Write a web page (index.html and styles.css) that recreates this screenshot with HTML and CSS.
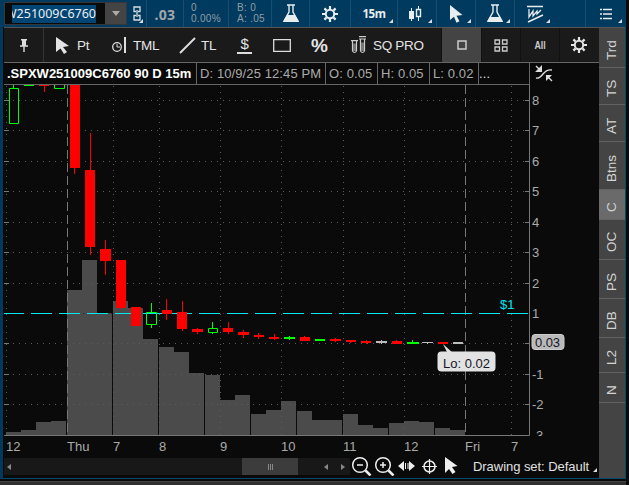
FILE: index.html
```html
<!DOCTYPE html>
<html lang="en">
<head>
<meta charset="utf-8">
<title>.SPXW251009C6760</title>
<link rel="stylesheet" href="styles.css">
</head>
<body>
<div class="window">
<header class="topbar">
  <div class="symbol"><div class="symbol-text"><span>W251009C6760</span></div><div class="drop"><svg width="8" height="5"><path d="M0 0h8L4 5z" fill="#aaa"/></svg></div></div>
  <div class="cell w20 corner link"><svg width="8" height="15" viewBox="0 0 8 15" fill="none" stroke="#d8dde0" stroke-width="1.3"><path d="M3 5.500H1V1h6v4.500H5M3 9.500H1V14h6V9.500H5M4 4v7"/></svg></div>
  <div class="cell w37 last">.03</div>
  <div class="cell w45 quote"><div>0</div><div>0.00%</div></div>
  <div class="cell w43 quote bid"><div>B: 0</div><div>A: .05</div></div>
  <div class="cell w38"><svg width="18" height="19" viewBox="0 0 18 19"><path d="M5 1h8M7 1v7L2 17h14L11 8V1" fill="none" stroke="#e8edf0" stroke-width="1.400"/><path d="M5 11h8l4 7H1z" fill="#e8edf0"/></svg></div>
  <div class="cell w41"><svg width="18" height="18" viewBox="-9 -9 18 18"><circle r="4.200" fill="none" stroke="#e8edf0" stroke-width="2"/><path d="M0-5v-3M0 5v3M5 0h3M-5 0h-3M3.600-3.600l2-2M-3.600-3.600l-2-2M3.600 3.600l2 2M-3.600 3.600l-2 2" stroke="#e8edf0" stroke-width="2.200"/></svg></div>
  <div class="cell w47 corner interval">15m</div>
  <div class="cell w39 corner candles"><svg width="14" height="16" viewBox="0 0 14 16"><path d="M3.500 2v13M10.500 0v3M10.500 11v4" stroke="#e8edf0"/><path d="M1 5h5v8H1z" fill="#e8edf0"/><path d="M8.500 3.500h4v7h-4z" fill="none" stroke="#e8edf0" stroke-width="1.400"/></svg></div>
  <div class="cell w39 corner"><svg width="13" height="18" viewBox="0 0 13 18"><path d="M0 0l12.500 10-6 .8 3 5.500-3 1.500-2.500-6L0 15z" fill="#e8edf0"/></svg></div>
  <div class="cell w39 corner"><svg width="18" height="19" viewBox="0 0 18 19"><path d="M5 1h8M7 1v7L2 17h14L11 8V1" fill="none" stroke="#e8edf0" stroke-width="1.400"/><path d="M4 13h10l3 5H1z" fill="#e8edf0"/></svg></div>
  <div class="cell w71 corner study"><svg width="17" height="18" viewBox="0 0 17 18" fill="none" stroke="#e8edf0" stroke-width="1.500"><path d="M0 1.500h16M1 17l15-7"/><path d="M2 4v8l4-6v5l4-5v3l4-4" stroke-width="1.300"/></svg></div>
  <div class="cell w40 corner list"><svg width="14" height="12" viewBox="0 0 14 12" stroke="#e8edf0" stroke-width="1.600"><path d="M1 1.500h2M4 1.500h9M1 6h2M4 6h9M1 10.500h2M4 10.500h9"/></svg></div>
</header>
<main class="main">
  <section class="panel">
    <nav class="tools">
      <div class="tool pin"><svg width="8" height="13" viewBox="0 0 8 13"><path d="M1 .7h6M0 7h8M4 7v6" stroke="#ddd" stroke-width="1.400"/><path d="M2 0h4v7H2z" fill="#ddd"/></svg></div>
      <div class="tool pt"><svg width="14" height="17" viewBox="0 0 14 17"><path d="M0 0l13 9-6 1 4 5-3 2-3.500-5.500L0 15z" fill="#e4e4e4"/></svg><span>Pt</span></div>
      <div class="tool tml"><svg width="14" height="16" viewBox="0 0 14 16" fill="none" stroke="#ddd"><circle cx="5" cy="10" r="4.300" stroke-width="1.300"/><path d="M5 7v3h3"/><path d="M13 0v16" stroke-width="2"/></svg><span>TML</span></div>
      <div class="tool tl"><svg width="17" height="17" viewBox="0 0 17 17"><path d="M1 16L16 1" stroke="#ddd" stroke-width="2"/></svg><span>TL</span></div>
      <div class="tool dollar"><span>$</span></div>
      <div class="tool rect"><svg width="18" height="13"><path d="M.7.700h16.600v11.600H.700z" fill="none" stroke="#ddd" stroke-width="1.300"/></svg></div>
      <div class="tool percent">%</div>
      <div class="tool sq"><svg width="15" height="18" viewBox="0 0 15 18" fill="none" stroke="#ccc" stroke-width="1.200"><path d="M0 4.600h7M8 .7h7M8 3h7"/><path d="M1.500 5v10Q3.500 18 5.500 15V5M9.500 3v12q2 3 4 0V3"/><path d="M2 7.500h3V15H2zM10 6.500h3V15h-3z" fill="#777" stroke="none"/></svg><span>SQ PRO</span></div>
      <div class="view active"><svg width="10" height="10"><path d="M1 1h8v8H1z" fill="none" stroke="#ccc" stroke-width="1.500"/></svg></div>
      <div class="view"><svg width="14" height="13" fill="none" stroke="#ccc" stroke-width="1.300"><path d="M1 1h4.500v4H1zM8.500 1H13v4H8.500zM1 8h4.500v4H1zM8.500 8H13v4H8.500z"/></svg></div>
      <div class="view all"><span>All</span></div>
      <div class="view"><svg width="18" height="18" viewBox="-9 -9 18 18"><circle r="4.200" fill="none" stroke="#e4e4e4" stroke-width="2"/><path d="M0-5v-3M0 5v3M5 0h3M-5 0h-3M3.600-3.600l2-2M-3.600-3.600l-2-2M3.600 3.600l2 2M-3.600 3.600l-2 2" stroke="#e4e4e4" stroke-width="2.200"/></svg></div>
    </nav>
    <div class="info">
      <div class="name">.SPXW251009C6760 90 D 15m</div>
      <div class="date">D: 10/9/25 12:45 PM</div>
      <div class="ohl">O: 0.05</div>
      <div class="ohl">H: 0.05</div>
      <div class="ohl low">L: 0.02</div>
      <div class="more">...</div>
      <div class="expand"><svg width="18" height="17" viewBox="0 0 18 17" fill="none" stroke="#ddd" stroke-width="1.400"><path d="M1 13q3 1 7-4t9-4M1 1l4 4M17 16l-4-4"/><path d="M7 0v7H0zM11 10h6l-6 6z" fill="#ddd" stroke="none"/></svg></div>
    </div>
    <svg class="chart" width="595" height="373" viewBox="4 85 595 373">
      <path class="vol" d="M6 435v-3h15v-2h15v-8h15v-1h15v14zM67 435V290h15v-30h15v53h15v122zM113 435V301h15v7h15v31h15v96zM159 435v-88h15v5h15v21h15v62zM205 435v-60h15v25h15v-5h15v40zM251 435v-21h15v-4h15v-9h15v34zM297 435v-24h15v9h30v15zM343 435v-21h15v11h15v3h15v7zM389 435v-12h15v-2h15v1h15v13zM435 435v-7h15v2h15v5z"/>
      <path class="grid" d="M7 100.500h522M7 130.500h522M7 161.500h522M7 191.500h522M7 222.500h522M7 252.500h522M7 283.500h522M7 343.500h522M7 374.500h522M7 404.500h522M6.500 86v349M113.500 86v349M159.500 86v349M220.500 86v349M281.500 86v349M343.500 86v349M404.500 86v349M511.500 86v349"/>
      <path class="session" d="M67.500 85v350M465.500 85v350"/>
      <path class="frame" d="M4 435.500h525.500V85M525 100.500h4M525 130.500h4M525 161.500h4M525 191.500h4M525 222.500h4M525 252.500h4M525 283.500h4M525 343.500h4M525 374.500h4M525 404.500h4M4 100.500h5M4 130.500h5M4 161.500h5M4 191.500h5M4 222.500h5M4 252.500h5M4 283.500h5M4 343.500h5M4 374.500h5M4 404.500h5"/>
      <path class="level" d="M3 313.500h525.500"/>
      <path class="level-dots" d="M27 313.500h501.500"/>
      <path class="down" d="M39 84h10v2H39zM44 85h1v7h-1zM70 84h10v84H70zM74 168h1v6h-1zM85 170h10v77H85zM90 133h1v122h-1zM100 249h11v12h-11zM105 240h1v35h-1zM116 260h10v48h-10zM120 308h1v1h-1zM131 307h10v19h-10zM162 310h10v4h-10zM166 299h1v21h-1zM177 312h10v17h-10zM182 301h1v30h-1zM192 329h11v3h-11zM197 328h1v6h-1zM223 328h10v4h-10zM228 322h1v12h-1zM238 332h11v3h-11zM243 330h1v8h-1zM254 335h10v2h-10zM258 333h1v6h-1zM269 337h10v2h-10zM274 334h1v6h-1zM300 337h10v4h-10zM304 336h1v1h-1zM330 339h11v2h-11zM335 338h1v4h-1zM346 340h10v2h-10zM350 342h1v1h-1zM361 341h10v2h-10zM366 340h1v4h-1zM392 341h10v3h-10zM396 340h1v1h-1zM438 342h10v2h-10z"/>
      <path class="up-line" d="M9.500 88.500h9v35h-9zM13.500 85v3M24 85.500h10M54.500 83.500h10v5h-10zM146.500 312.500h10v12h-10zM151.500 303v9M151.500 325v3M208.500 328.500h9v4h-9zM212.500 322v6M212.500 333v1M289.500 336v4M412.500 340v3"/>
      <path class="up" d="M284 337h11v2h-11zM315 339h10v2h-10zM407 342h12v2h-12z"/>
      <path class="flat" d="M376 341h11v2h-11zM381 340h1v4h-1zM422 342h11v1h-11zM427 342h1v2h-1zM453 342h10v2h-10z"/>
      <text class="cyan" x="500" y="309">$1</text>
      <g class="axis"><text x="532" y="105">8</text><text x="532" y="135">7</text><text x="532" y="166">6</text><text x="532" y="196">5</text><text x="532" y="227">4</text><text x="532" y="257">3</text><text x="532" y="288">2</text><text x="532" y="318">1</text><text x="532" y="379">-1</text><text x="532" y="409">-2</text><svg x="530" y="425" width="20" height="11"><text x="6" y="15">3</text></svg>
      <text x="6" y="451">12</text><text x="67" y="451">Thu</text><text x="113" y="451">7</text><text x="159" y="451">8</text><text x="220" y="451">9</text><text x="281" y="451">10</text><text x="343" y="451">11</text><text x="404" y="451">12</text><text x="465" y="451">Fri</text><text x="511" y="451">7</text></g>
      <path d="M443 344l5 10h6z" fill="#e2e2e2"/><rect x="437.500" y="351.500" width="58" height="20" rx="4" fill="#e2e2e2"/>
      <text class="dark" x="443" y="368" textLength="47">Lo: 0.02</text>
      <rect x="532" y="334.500" width="32" height="15" rx="3" fill="#b9b9b9" stroke="#ccc"/><text class="dark" x="535" y="347" textLength="25">0.03</text>
    </svg>
    <footer class="bottom">
      <div class="scroll"><svg width="4" height="6"><path d="M4 0v6L0 3z"/></svg><div class="thumb"><i></i><i></i><i></i></div><svg width="4" height="6"><path d="M4 0v6L0 3z"/></svg><svg width="4" height="6"><path d="M0 0v6l4-3z"/></svg></div>
      <svg class="nav-icons" width="108" height="20" viewBox="351 456 108 20" fill="none" stroke="#eee" stroke-width="1.500"><circle cx="360" cy="465" r="7.300"/><path d="M365.500 470.500l5 5" stroke-width="2.500"/><path d="M357 465h6"/><circle cx="383" cy="465" r="7.300"/><path d="M388.500 470.500l5 5" stroke-width="2.500"/><path d="M380 465h6M383 462v6"/><path d="M404 461v10l-6-5zM409 461v10l6-5z" fill="#eee" stroke="none"/><path d="M405.500 463v6M408 463v6" stroke-width="1"/><circle cx="429.500" cy="466.500" r="5.500"/><path d="M422 466.500h15M429.500 459v15" stroke-width="1.200"/><path d="M445 457l12.500 9-5.500 1 3.500 5-3 2-3.500-5-4 4z" fill="#eee" stroke="none"/></svg>
      <span class="set">Drawing set: Default</span>
      <svg class="set-corner" width="4" height="4"><path d="M4 0v4H0z" fill="#ddd"/></svg>
    </footer>
  </section>
  <aside class="tabs">
    <div class="t39">Trd</div><div class="t37">TS</div><div class="t37">AT</div><div class="t48">Btns</div><div class="t30 on">C</div><div class="t40">OC</div><div class="t39">PS</div><div class="t39">DB</div><div class="t35">L2</div><div class="t30">N</div><div class="rest"></div>
  </aside>
</main>
<div class="edge"></div>
</div>
</body>
</html>
```

FILE: styles.css
```css
* { box-sizing: border-box; }
body { margin: 0; width: 629px; height: 485px; overflow: hidden; background: #0a0a0a; color: #ddd; font: 14px "Liberation Sans", sans-serif; }
svg { display: block; flex: none; }
.window { display: flex; flex-direction: column; height: 485px; border-right: 3px solid #0a0a0a; }
.topbar { display: flex; height: 27px; background: #003a5e; padding-left: 4px; width: 626px; }
.symbol { display: flex; width: 123px; height: 23px; margin-top: 2px; border: 1px solid #33383c; background: #0a0a0a; }
.symbol-text { width: 84px; margin: 2px 0 0 7px; overflow: hidden; display: flex; justify-content: flex-end; color: #eee; font: 12.5px/17px "Noto Sans", sans-serif; letter-spacing: 0; }
.symbol-text span { background: #004574; flex: none; height: 18px; }
.drop { width: 21px; margin-left: 9px; background: #444; display: flex; align-items: center; justify-content: center; }
.cell { display: flex; align-items: center; justify-content: center; border-right: 1px solid #174e70; height: 27px; position: relative; }
.corner::after { content: ""; position: absolute; right: 4px; bottom: 4px; border-style: solid; border-width: 0 0 4px 4px; border-color: transparent transparent #ddd; }
.w20 { width: 20px; } .w37 { width: 37px; } .w45 { width: 45px; } .w43 { width: 43px; } .w38 { width: 38px; } .w41 { width: 41px; } .w47 { width: 47px; } .w39 { width: 39px; }
.w71 { width: 71px; } .w40 { width: 40px; border: 0; }
.cell.link { justify-content: flex-start; padding-left: 6px; }
.link::after { right: 3px; }
.last { color: #a0a6aa; font: bold 14px "Noto Sans", sans-serif; letter-spacing: .3px; padding-top: 1px; }
.quote { flex-direction: column; align-items: flex-start; justify-content: flex-start; padding: 2px 0 0 7px; color: #929da4; font: 10px/11px "Liberation Sans", sans-serif; letter-spacing: .3px; }
.bid { padding-left: 8px; }
.interval { color: #e8edf0; font: bold 11.5px "Noto Sans", sans-serif; letter-spacing: -.4px; }
.candles { padding-right: 4px; }
.study { justify-content: flex-start; padding-left: 12px; }
.study::after { right: 35px; }
.main { display: flex; height: 452px; border-left: 3px solid #00395a; border-bottom: 1px solid #004a70; border-right: 1px solid #004a70; width: 626px; }
.panel { width: 596px; padding-left: 1px; }
.tools { display: flex; height: 35px; background: #1a1a1a; border-top: 1px solid #555; }
.tool { display: flex; align-items: center; white-space: nowrap; font-size: 13.5px; letter-spacing: -.3px; color: #e4e4e4; }
.pin { width: 40px; border-right: 1px solid #333; justify-content: center; }
.pt { width: 68px; padding-left: 12px; gap: 7px; }
.tml { width: 63px; gap: 7px; }
.tl { width: 62px; padding-left: 4px; gap: 5px; }
.dollar { width: 36px; font-size: 15px; }
.dollar span { border-bottom: 2px solid #ddd; width: 15px; height: 18px; line-height: 15px; text-align: center; }
.rect { width: 38px; }
.percent { width: 40px; font-size: 19px; font-weight: bold; padding-top: 2px; }
.sq { width: 90px; gap: 7px; }
.view { width: 39px; border-left: 1px solid #111; display: flex; align-items: center; justify-content: center; }
.view.active { background: #444; width: 40px; }
.all { font: bold 11px "Liberation Sans", sans-serif; color: #ccc; }
.all span { transform: scaleX(.8); }
.info { display: flex; height: 23px; border-top: 1px solid #666; line-height: 21px; white-space: nowrap; color: #aaa; font-size: 13px; letter-spacing: .1px; }
.info > div { border-right: 1px solid #666; border-bottom: 1px solid #666; padding-left: 3px; }
.info .name { width: 193px; color: #fff; font-weight: bold; letter-spacing: 0; }
.info .date { width: 129px; }
.info .ohl { width: 52px; }
.info .low { width: 49px; }
.info .more { width: 51px; padding-left: 0; color: #ddd; }
.info .expand { border: 0; padding: 2px 0 0 5px; }
.chart { display: block; font: 13px "Liberation Sans", sans-serif; }
.vol { fill: #4b4b4b; }
.grid { stroke: #5c5c5c; stroke-dasharray: 1 5; }
.session { stroke: #777; stroke-dasharray: 9 4; }
.frame { fill: none; stroke: #777; }
.level { stroke: #00e8f0; stroke-dasharray: 21 7; }
.level-dots { stroke: #611; stroke-dasharray: 1 27; }
.down { fill: #f00; }
.up { fill: #0f0; }
.up-line { fill: none; stroke: #0f0; }
.flat { fill: #bbb; }
.axis { fill: #aaa; }
.cyan { fill: #00e5ee; }
.dark { fill: #151525; }
.bottom { display: flex; height: 20px; }
.scroll { display: flex; align-items: center; width: 346px; height: 17px; background: #181818; padding-left: 3px; fill: #888; }
.thumb { display: flex; gap: 1px; align-items: center; justify-content: center; width: 56px; height: 17px; background: #3c3c3c; margin: 0 26px 0 231px; }
.thumb i { width: 1px; height: 6px; background: #888; }
.scroll svg:last-child { margin-left: 13px; }
.nav-icons { margin: -2px 0 0 1px; }
.set { margin-left: 14px; line-height: 17px; white-space: nowrap; font-size: 13px; letter-spacing: -.05px; color: #e0e0e0; width: 118px; }
.set-corner { margin: 10px 0 0 2px; }
.tabs { width: 26px; border-top: 1px solid #555; background: #444; color: #d4d4d4; font-size: 13.5px; display: flex; flex-direction: column; }
.tabs div { writing-mode: vertical-rl; transform: rotate(180deg); width: 26px; text-align: center; line-height: 25px; padding-bottom: 5px; border-bottom: 1px solid #626262; }
.tabs div:first-child { border: 0; }
.t39 { height: 39px; } .t37 { height: 37px; } .t48 { height: 48px; } .t30 { height: 30px; } .t40 { height: 40px; } .t35 { height: 35px; }
.on { background: #6a6a6a; }
.rest { flex: 1; }
.edge { margin-top: 2px; height: 4px; border-top: 1px solid #444; background: #303030; }
```
